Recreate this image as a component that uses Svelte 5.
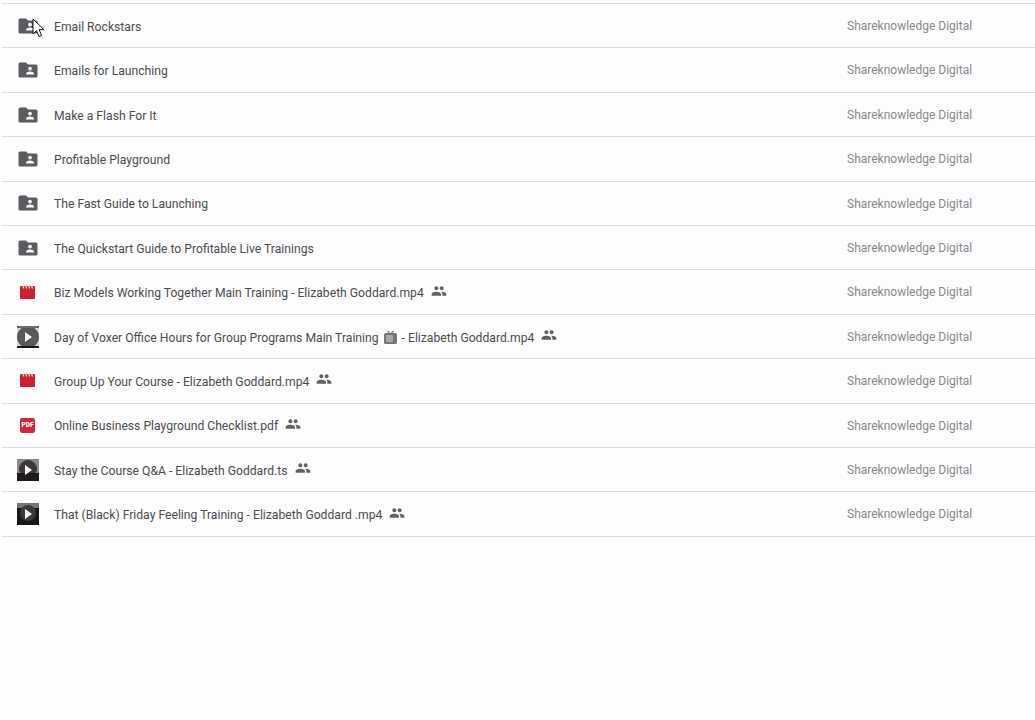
<script lang="ts">
	type Row = { name: string; kind: string; shared?: boolean; tv?: boolean };

	const rows: Row[] = [
		{ name: 'Email Rockstars', kind: 'folder' },
		{ name: 'Emails for Launching', kind: 'folder' },
		{ name: 'Make a Flash For It', kind: 'folder' },
		{ name: 'Profitable Playground', kind: 'folder' },
		{ name: 'The Fast Guide to Launching', kind: 'folder' },
		{ name: 'The Quickstart Guide to Profitable Live Trainings', kind: 'folder' },
		{ name: 'Biz Models Working Together Main Training - Elizabeth Goddard.mp4', kind: 'video', shared: true },
		{ name: 'Day of Voxer Office Hours for Group Programs Main Training', kind: 'thumb-a', shared: true, tv: true },
		{ name: 'Group Up Your Course - Elizabeth Goddard.mp4', kind: 'video', shared: true },
		{ name: 'Online Business Playground Checklist.pdf', kind: 'pdf', shared: true },
		{ name: 'Stay the Course Q&A - Elizabeth Goddard.ts', kind: 'thumb-b', shared: true },
		{ name: 'That (Black) Friday Feeling Training - Elizabeth Goddard .mp4', kind: 'thumb-c', shared: true }
	];
</script>

<div class="page">
	<ul class="list">
		{#each rows as row, i}
			<li class="row">
				<span class="icon">
					{#if row.kind === 'folder'}
						<svg width="20" height="20" viewBox="0 0 20 20" aria-hidden="true">
							<path d="M2 2.500h6l2 2h8a1.500 1.500 0 0 1 1.500 1.500v10a1.500 1.500 0 0 1-1.500 1.500H2A1.500 1.500 0 0 1 .5 16V4A1.500 1.500 0 0 1 2 2.500z" fill="#5b5c60" />
							<circle cx="12" cy="8.600" r="1.900" fill="#fff" />
							<path d="M8 14.400v-.9c0-1.400 2.700-2.100 4-2.100s4 .7 4 2.100v.9z" fill="#fff" />
						</svg>
					{:else if row.kind === 'video'}
						<svg width="15" height="13" viewBox="0 0 15 13" aria-hidden="true">
							<path d="M1 0h1.300l1 2.400h1.100L3.400 0h1.800l1 2.400h1.100L6.300 0h1.800l1 2.400h1.100L9.200 0H11l1 2.400h1.100L12.100 0H14a1 1 0 0 1 1 1v11a1 1 0 0 1-1 1H1a1 1 0 0 1-1-1V1a1 1 0 0 1 1-1z" fill="#cf202f" />
						</svg>
					{:else if row.kind === 'pdf'}
						<span class="pdf">PDF</span>
					{:else}
						<span class="thumb {row.kind}">
							<span class="disc"></span>
							<span class="figure"></span>
							<svg class="play" width="7" height="10" viewBox="0 0 7 10" aria-hidden="true"><path d="M0 0l7 5-7 5z" fill="#fff" /></svg>
						</span>
					{/if}
				</span>
				<span class="name">
					{row.name}
					{#if row.tv}
						<svg class="tv" width="15" height="15" viewBox="0 0 15 15" aria-hidden="true">
							<path d="M4.500 1l2 2M10.500 1l-2 2" stroke="#77757a" stroke-width="1.200" />
							<rect x="1" y="3" width="13" height="11" rx="1.500" fill="#77757a" />
							<rect x="3" y="5" width="7" height="7" rx="1" fill="#a9a7aa" />
						</svg>
						- Elizabeth Goddard.mp4
					{/if}
				</span>
				{#if row.shared}
					<svg class="people" width="16" height="16" viewBox="0 0 24 24" aria-hidden="true">
						<path d="M16 11c1.660 0 2.990-1.340 2.990-3S17.660 5 16 5s-3 1.340-3 3 1.340 3 3 3zm-8 0c1.660 0 2.990-1.340 2.990-3S9.660 5 8 5 5 6.340 5 8s1.340 3 3 3zm0 2c-2.330 0-7 1.170-7 3.500V19h14v-2.500c0-2.330-4.670-3.500-7-3.500zm8 0c-.29 0-.62.02-.97.050 1.160.84 1.970 1.970 1.970 3.450V19h6v-2.500c0-2.330-4.670-3.500-7-3.500z" fill="#5f6368" />
					</svg>
				{/if}
				<span class="owner">Shareknowledge Digital</span>
				{#if i === 0}
					<svg class="cursor" width="14" height="20" viewBox="0 0 14 20" aria-hidden="true">
						<path d="M1 1v15l3.500-3.300 2.500 5.800 2.600-1.100-2.500-5.700H12z" fill="#fff" stroke="#111" stroke-width="1" stroke-linejoin="round" />
					</svg>
				{/if}
			</li>
		{/each}
	</ul>
</div>

<style>
	:global(body) {
		background: #fefdfe;
	}

	.page {
		height: 720px;
		padding: 3px 0 0 2px;
		box-sizing: border-box;
		overflow: hidden;
		font-family: Roboto, 'Liberation Sans', sans-serif;
	}

	.list {
		list-style: none;
		margin: 0;
		padding: 0;
		border-top: 1px solid #dcdcde;
	}

	.row {
		position: relative;
		display: flex;
		align-items: center;
		height: 44.42px;
		box-sizing: border-box;
		border-bottom: 1px solid #dcdcde;
	}

	.icon {
		flex: none;
		width: 52px;
		padding: 0 15px 0 14px;
		box-sizing: border-box;
		display: flex;
		align-items: center;
		justify-content: center;
	}

	.icon svg {
		display: block;
	}

	.pdf {
		flex: none;
		width: 15px;
		height: 15px;
		border-radius: 2px;
		background: #d6273a;
		color: #fff;
		font-size: 6.5px;
		font-weight: 900;
		line-height: 15px;
		text-align: center;
	}

	.thumb {
		position: relative;
		flex: none;
		width: 22px;
		height: 22px;
		display: flex;
		align-items: center;
		justify-content: center;
		overflow: hidden;
		box-sizing: border-box;
	}

	.disc,
	.figure {
		position: absolute;
	}

	.thumb-a {
		background: #d8d7d9;
		border-top: 2px solid #6b696d;
		border-bottom: 2px solid #19171a;
	}

	.thumb-a .disc {
		inset: -2px 0;
		border-radius: 50%;
		background: #59585c;
	}

	.thumb-b {
		background: #8b8688;
	}

	.thumb-b .disc {
		left: 2px;
		top: 1px;
		width: 18px;
		height: 18px;
		border-radius: 50%;
		background: #3b3738;
	}

	.thumb-b .figure {
		left: 0;
		right: 0;
		bottom: 0;
		height: 8px;
		background: #1d1a1b;
	}

	.thumb-c {
		background: #19171a;
	}

	.thumb-c .disc {
		left: 0;
		right: 0;
		top: 0;
		height: 5px;
		background: #77747a;
	}

	.thumb-c .figure {
		left: 3px;
		top: 2px;
		width: 16px;
		height: 16px;
		border-radius: 50%;
		background: #3c393b;
	}

	.play {
		position: relative;
		left: 1px;
	}

	.name {
		position: relative;
		top: 1px;
		font-size: 12.16px;
		color: #4a4c50;
		white-space: nowrap;
	}

	.tv {
		vertical-align: -3px;
		margin: 0 1px;
	}

	.people {
		flex: none;
		margin: -3px 0 0 7px;
	}

	.owner {
		position: absolute;
		left: 845px;
		top: 15px;
		font-size: 12px;
		color: #88898d;
		white-space: nowrap;
	}

	.cursor {
		position: absolute;
		left: 30px;
		top: 14px;
	}
</style>
